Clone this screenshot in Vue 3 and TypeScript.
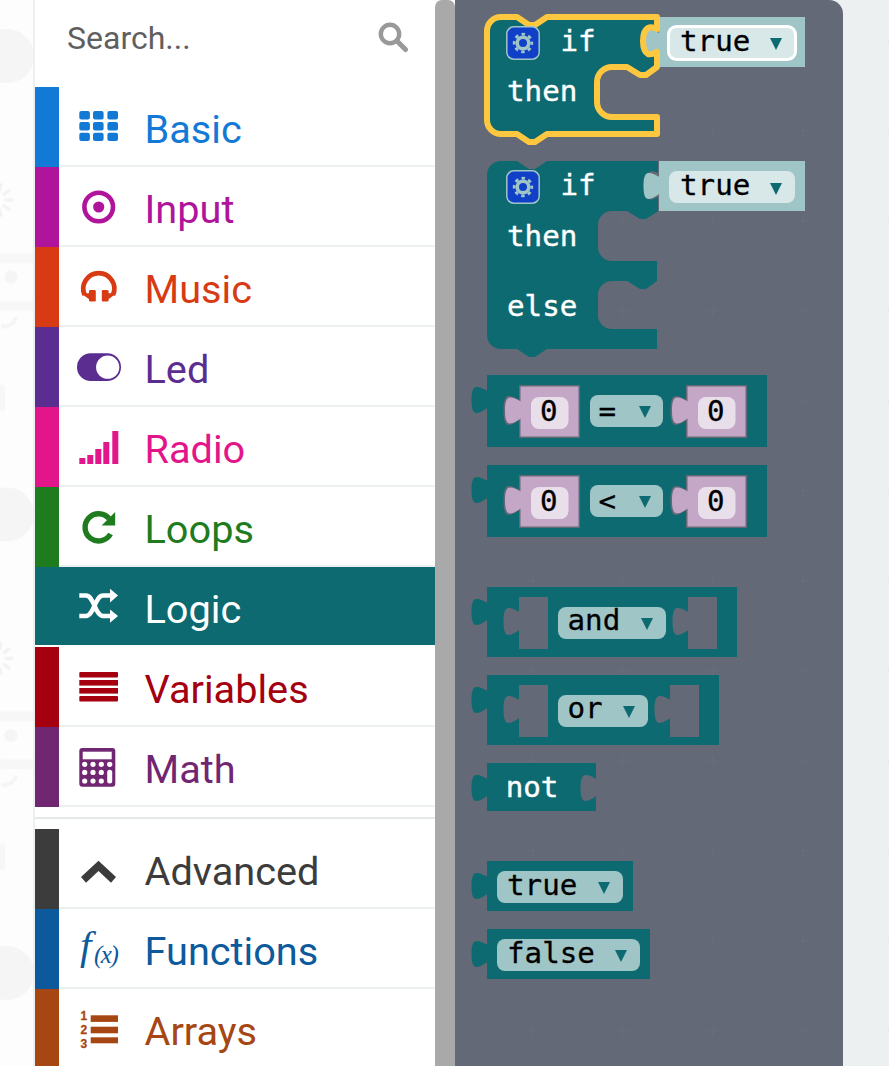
<script setup lang="ts">
type Category = { name: string; color: string; icon: string; selected?: boolean };

const categories: Category[] = [
  { name: "Basic", color: "#1379d6", icon: "grid" },
  { name: "Input", color: "#b0149a", icon: "dot" },
  { name: "Music", color: "#d83b14", icon: "headphones" },
  { name: "Led", color: "#5c2d91", icon: "toggle" },
  { name: "Radio", color: "#e3158a", icon: "signal" },
  { name: "Loops", color: "#1e7b1e", icon: "refresh" },
  { name: "Logic", color: "#0d6a70", icon: "shuffle", selected: true },
  { name: "Variables", color: "#a4000f", icon: "list" },
  { name: "Math", color: "#712672", icon: "calculator" },
];

const advanced: Category[] = [
  { name: "Advanced", color: "#3c3c3c", icon: "chevron" },
  { name: "Functions", color: "#0c5a9c", icon: "functions" },
  { name: "Arrays", color: "#a64612", icon: "numbered" },
];

// puzzle tab, x is the edge it hangs off, y the top of the tab
function tab(x: number, y: number, h = 26): string {
  const m = h / 2;
  return (
    `M${x} ${y + 4} C${x - 4} ${y + 2} ${x - 7} ${y} ${x - 11} ${y} ` +
    `C${x - 15} ${y} ${x - 16} ${y + m - 7} ${x - 16} ${y + m} ` +
    `C${x - 16} ${y + m + 7} ${x - 15} ${y + h} ${x - 11} ${y + h} ` +
    `C${x - 7} ${y + h} ${x - 4} ${y + h - 3} ${x} ${y + h - 5} Z`
  );
}

function tri(x: number, y: number): string {
  return `${x},${y} ${x + 12},${y} ${x + 6},${y + 12}`;
}

const notchTop = (y: number) => `L517 ${y} L529 ${y + 8} L535 ${y + 8} L547 ${y}`;

// the two "if" blocks share their outline, only the number of statements differ
const ifSelected =
  `M487 31 A14 14 0 0 1 501 17 ${notchTop(17)} L657 17 L657 29 ` +
  `C653 27 650 27 648 28 C644 30 643 36 643 41 C643 47 644 52 648 54 C650 55 653 54 657 52 ` +
  `L657 67 L646 75 L640 75 L627 67 L612 67 A15 15 0 0 0 597 82 L597 102 A15 15 0 0 0 612 117 ` +
  `L657 117 L657 134 L547 134 L535 142 L529 142 L517 134 L501 134 A14 14 0 0 1 487 120 Z`;

const ifElse =
  `M487 175 A14 14 0 0 1 501 161 ${notchTop(161)} L658 161 L658 173 ` +
  `C654 171 651 171 649 172 C645 174 644 180 644 186 C644 192 645 198 649 199 C651 200 654 199 658 197 ` +
  `L658 211 L657 212 L646 219 L640 219 L627 211 L612 211 A14 14 0 0 0 598 225 L598 247 A14 14 0 0 0 612 261 ` +
  `L657 261 L657 281 L646 289 L640 289 L627 281 L612 281 A14 14 0 0 0 598 295 L598 315 A14 14 0 0 0 612 329 ` +
  `L657 329 L657 349 L547 349 L535 357 L529 357 L517 349 L501 349 A14 14 0 0 1 487 335 Z`;

const flat = [
  { x: 487, y: 375, w: 280, h: 72, tab: 387 },
  { x: 487, y: 465, w: 280, h: 72, tab: 477 },
  { x: 487, y: 587, w: 250, h: 70, tab: 599 },
  { x: 487, y: 675, w: 232, h: 70, tab: 687 },
  { x: 487, y: 763, w: 109, h: 48, tab: 775 },
  { x: 487, y: 861, w: 146, h: 50, tab: 873 },
  { x: 487, y: 929, w: 163, h: 50, tab: 941 },
];

const numbers = [
  { x: 519, y: 385, tx: 540 },
  { x: 686, y: 385, tx: 707 },
  { x: 519, y: 475, tx: 540 },
  { x: 686, y: 475, tx: 707 },
];

const holes = [
  { x: 519, y: 597 },
  { x: 688, y: 597 },
  { x: 519, y: 685 },
  { x: 670, y: 685 },
];

const dropdowns = [
  { x: 590, y: 395, w: 73, label: "=", tx: 598.5, tb: 421, ax: 639, ay: 406 },
  { x: 590, y: 485, w: 73, label: "<", tx: 598.5, tb: 511, ax: 639, ay: 496 },
  { x: 558, y: 607, w: 108, label: "and", tx: 567.5, tb: 630, ax: 641, ay: 618 },
  { x: 558, y: 695, w: 90, label: "or", tx: 567.5, tb: 718, ax: 623, ay: 706 },
  { x: 497, y: 871, w: 126, label: "true", tx: 507, tb: 895, ax: 598, ay: 882 },
  { x: 497, y: 939, w: 143, label: "false", tx: 507, tb: 963, ax: 615, ay: 950 },
];

const ghostRays = [0, 36, 72, 108, 144];
</script>

<template>
  <div class="page">
    <svg class="ghost" width="33" height="1066">
      <defs>
        <pattern id="ghostTile" width="33" height="458.5" patternUnits="userSpaceOnUse">
          <circle cx="7" cy="56" r="27" fill="#f5f5f5" />
          <g stroke="#f3f3f3" stroke-width="3.5" stroke-linecap="round">
            <line
              v-for="r in ghostRays"
              :key="r"
              x1="6"
              y1="200"
              x2="12"
              y2="200"
              :transform="`rotate(${r - 72} -4 200)`"
            />
          </g>
          <rect x="-7" y="258" width="70" height="48" rx="10" fill="none" stroke="#f7f7f7" stroke-width="10" />
          <circle cx="11" cy="277" r="6.5" fill="#f5f5f5" />
          <path d="M1 326 A12 12 0 0 0 16 317" fill="none" stroke="#f5f5f5" stroke-width="4" />
          <rect x="-3" y="385" width="8" height="26" fill="#f7f7f7" />
        </pattern>
      </defs>
      <rect width="33" height="1066" fill="url(#ghostTile)" />
    </svg>

    <aside class="toolbox">
      <div class="search">
        <span class="search-text">Search...</span>
        <svg class="search-icon" width="32" height="32" viewBox="0 0 32 32">
          <circle cx="13" cy="12" r="9.2" fill="none" stroke="#999" stroke-width="4.4" />
          <line x1="20" y1="19" x2="28.5" y2="27.5" stroke="#999" stroke-width="5" stroke-linecap="round" />
        </svg>
      </div>

      <template v-for="(list, li) in [categories, advanced]" :key="li">
        <div v-if="li === 1" class="separator"></div>
        <div
          v-for="c in list"
          :key="c.name"
          class="row"
          :class="{ selected: c.selected }"
          :style="{ '--c': c.color }"
        >
          <span class="bar"></span>
          <div class="row-body">
            <svg class="icon" width="44" height="44" viewBox="0 0 44 44" fill="currentColor">
              <g v-if="c.icon === 'grid'">
                <rect x="2.3" y="7" width="10.6" height="8.4" rx="2" />
                <rect x="16" y="7" width="10.6" height="8.4" rx="2" />
                <rect x="30.4" y="7" width="10.6" height="8.4" rx="2" />
                <rect x="2.3" y="18" width="10.6" height="8.6" rx="2" />
                <rect x="16" y="18" width="10.6" height="8.6" rx="2" />
                <rect x="30.4" y="18" width="10.6" height="8.6" rx="2" />
                <rect x="2.3" y="28.7" width="10.6" height="8.4" rx="2" />
                <rect x="16" y="28.7" width="10.6" height="8.4" rx="2" />
                <rect x="30.4" y="28.7" width="10.6" height="8.4" rx="2" />
              </g>
              <g v-else-if="c.icon === 'dot'">
                <circle cx="21.7" cy="23" r="14.3" fill="none" stroke="currentColor" stroke-width="4.6" />
                <circle cx="21.7" cy="23" r="5.6" />
              </g>
              <g v-else-if="c.icon === 'headphones'">
                <path d="M7.7 31 A15.5 15.5 0 1 1 35.9 31" fill="none" stroke="currentColor" stroke-width="4.8" />
                <rect x="12" y="26" width="6.8" height="11.6" rx="1.4" />
                <rect x="24.8" y="26" width="6.8" height="11.6" rx="1.4" />
                <path d="M5 30 L12.5 35.5 L12.5 29 Z" />
                <path d="M38.6 30 L31.1 35.5 L31.1 29 Z" />
              </g>
              <g v-else-if="c.icon === 'toggle'">
                <rect x="0" y="9.3" width="44" height="27.7" rx="13.85" />
                <circle cx="30.7" cy="23.2" r="11.6" fill="#fff" />
              </g>
              <g v-else-if="c.icon === 'signal'">
                <rect x="2.3" y="34" width="6" height="6" />
                <rect x="10.3" y="31" width="6" height="9" />
                <rect x="18.3" y="25" width="6" height="15" />
                <rect x="26.3" y="18" width="6" height="22" />
                <rect x="35.3" y="7" width="6" height="33" />
              </g>
              <g v-else-if="c.icon === 'refresh'">
                <path d="M32 14.5 A13.6 13.6 0 1 0 33.5 30" fill="none" stroke="currentColor" stroke-width="5.4" />
                <polygon points="38.2,8 38.2,21.6 24.6,21.6" />
              </g>
              <g v-else-if="c.icon === 'shuffle'">
                <path
                  d="M2.3 11.5 H9 C17 11.5 18 32 26 32 H34 M2.3 32 H9 C17 32 18 11.5 26 11.5 H34"
                  fill="none"
                  stroke="currentColor"
                  stroke-width="4.4"
                />
                <polygon points="33,4.8 41,11.5 33,18.4" />
                <polygon points="33,25.4 41,32 33,38.8" />
              </g>
              <g v-else-if="c.icon === 'list'">
                <rect x="2.3" y="8" width="38.7" height="5.6" rx="1" />
                <rect x="2.3" y="16" width="38.7" height="5.6" />
                <rect x="2.3" y="24" width="38.7" height="5.6" />
                <rect x="2.3" y="32" width="38.7" height="5.6" rx="1" />
              </g>
              <g v-else-if="c.icon === 'calculator'">
                <rect x="2.3" y="4" width="36" height="38.7" rx="3" />
                <g fill="#fff">
                  <rect x="5.7" y="7.7" width="29" height="7.6" />
                  <circle cx="7.7" cy="20.3" r="2.6" />
                  <circle cx="16" cy="20.3" r="2.6" />
                  <circle cx="24.3" cy="20.3" r="2.6" />
                  <circle cx="32.7" cy="20.3" r="2.6" />
                  <circle cx="7.7" cy="28.4" r="2.6" />
                  <circle cx="16" cy="28.4" r="2.6" />
                  <circle cx="24.3" cy="28.4" r="2.6" />
                  <circle cx="7.7" cy="37" r="2.6" />
                  <circle cx="16" cy="37" r="2.6" />
                  <circle cx="24.3" cy="37" r="2.6" />
                  <rect x="30.2" y="25.8" width="5" height="13.8" rx="2.5" />
                </g>
              </g>
              <g v-else-if="c.icon === 'chevron'">
                <polygon points="21.5,14.7 39,31 34,36.7 21.5,25 9,36.7 4,31" />
              </g>
              <g v-else-if="c.icon === 'functions'">
                <text class="fn-f" x="3" y="33">f</text>
                <text class="fn-x" x="17" y="36.5">(x)</text>
              </g>
              <g v-else-if="c.icon === 'numbered'">
                <rect x="13.7" y="9.3" width="27.3" height="6.6" />
                <rect x="13.7" y="20.7" width="27.3" height="6.6" />
                <rect x="13.7" y="31.3" width="27.3" height="6" />
                <text class="num" x="3.4" y="14">1</text>
                <text class="num" x="3.4" y="28">2</text>
                <text class="num" x="3.4" y="42">3</text>
              </g>
            </svg>
            <span class="label">{{ c.name }}</span>
          </div>
        </div>
      </template>
    </aside>

    <div class="scrollbar"></div>

    <!-- coordinates are the page's own so the viewBox starts where this pane starts -->
    <svg class="workspace" viewBox="455 0 434 1066" width="434" height="1066">
      <defs>
        <pattern id="gridLight" x="438" y="36" width="90" height="90" patternUnits="userSpaceOnUse">
          <path d="M0 5 H10 M5 0 V10" stroke="#dcdfe0" stroke-width="1" fill="none" />
        </pattern>
        <pattern id="gridDark" x="438" y="36" width="90" height="90" patternUnits="userSpaceOnUse">
          <path d="M0 5 H10 M5 0 V10" stroke="#696d7a" stroke-width="1" fill="none" />
        </pattern>
        <g id="gear">
          <rect x="-16.2" y="-16.2" width="32.4" height="32.4" rx="7" fill="#1040c8" stroke="#9fc5c7" stroke-width="1.5" />
          <circle r="8.8" fill="none" stroke="#9fc5c7" stroke-width="2.8" stroke-dasharray="3.5 3.41" stroke-dashoffset="1.75" />
          <circle r="5.8" fill="none" stroke="#9fc5c7" stroke-width="3.6" />
        </g>
      </defs>

      <rect x="455" width="434" height="1066" fill="#ecf0f1" />
      <rect x="455" width="434" height="1066" fill="url(#gridLight)" />
      <path d="M455 0 H829 A14 14 0 0 1 843 14 V1066 H455 Z" fill="#646977" />
      <path d="M455 0 H829 A14 14 0 0 1 843 14 V1066 H455 Z" fill="url(#gridDark)" />

      <!-- if / then, selected -->
      <path :d="ifSelected" class="teal" />
      <path d="M659 17 H805 V67 H659 V52 L659 29 Z" class="light" />
      <path :d="tab(659, 29)" class="light" />
      <path :d="ifSelected" class="outline" />
      <use href="#gear" x="523" y="43" />
      <text class="word" x="560.5" y="51">if</text>
      <text class="word" x="507" y="101">then</text>
      <rect x="668.5" y="26.5" width="127" height="33" rx="8" class="pill-on" />
      <text class="dark" x="680" y="51">true</text>
      <polygon :points="tri(770, 38)" class="arrow" />

      <!-- if / then / else -->
      <path :d="ifElse" class="teal" />
      <rect x="659" y="161" width="146" height="50" class="light" />
      <path :d="tab(659.5, 173)" class="light" />
      <use href="#gear" x="523" y="187" />
      <text class="word" x="560.5" y="195">if</text>
      <text class="word" x="507" y="246">then</text>
      <text class="word" x="507" y="316">else</text>
      <rect x="669" y="171" width="126" height="32" rx="8" class="pill" />
      <text class="dark" x="680" y="195">true</text>
      <polygon :points="tri(770, 183)" class="arrow" />

      <!-- value blocks -->
      <g v-for="b in flat" :key="b.y">
        <rect :x="b.x" :y="b.y" :width="b.w" :height="b.h" class="teal" />
        <path :d="tab(b.x + 0.5, b.tab)" class="teal" />
      </g>

      <g v-for="n in numbers" :key="`${n.x}-${n.y}`">
        <rect :x="n.x" :y="n.y" width="61" height="53" class="hole" />
        <path :d="tab(n.x + 0.5, n.y + 11, 29)" class="hole" />
        <rect :x="n.x + 1.5" :y="n.y + 1.5" width="58" height="50" class="plum" />
        <path :d="tab(n.x + 2, n.y + 12.5, 26)" class="plum" />
        <rect :x="n.x + 12" :y="n.y + 12" width="37.5" height="32" rx="8" class="plum-pill" />
        <text class="dark" :x="n.tx" :y="n.y + 36">0</text>
      </g>

      <g v-for="h in holes" :key="`${h.x}-${h.y}`">
        <rect :x="h.x" :y="h.y" width="29" height="52" class="hole" />
        <path :d="tab(h.x + 0.5, h.y + 11, 27)" class="hole" />
      </g>

      <g v-for="d in dropdowns" :key="d.y">
        <rect :x="d.x" :y="d.y" :width="d.w" height="32" rx="8" class="light" />
        <text class="dark" :x="d.tx" :y="d.tb">{{ d.label }}</text>
        <polygon :points="tri(d.ax, d.ay)" class="arrow" />
      </g>

      <text class="word" x="505.7" y="797">not</text>
      <path :d="tab(596.5, 775)" class="hole" />
    </svg>
  </div>
</template>

<style scoped>
.page {
  display: flex;
  width: 889px;
  height: 1066px;
  overflow: hidden;
  background: #fdfdfd;
}

.ghost {
  flex: none;
  display: block;
}

.toolbox {
  flex: none;
  width: 400px;
  height: 1066px;
  overflow: hidden;
  background: #fff;
  border-left: 2px solid #ecf0f1;
  font-family: Roboto, "Liberation Sans", sans-serif;
}

.search {
  display: flex;
  align-items: center;
  justify-content: space-between;
  height: 87px;
  padding: 0 26px 12px 32px;
  box-sizing: border-box;
}

.search-text {
  font-size: 32px;
  color: #5f5f5f;
}

.search-icon {
  display: block;
}

.row {
  display: flex;
  height: 80px;
}

.bar {
  flex: none;
  width: 24px;
  background: var(--c);
}

.row-body {
  flex: 1;
  display: flex;
  align-items: center;
  gap: 23.5px;
  padding-left: 18px;
  border-bottom: 2px solid #ecf0f1;
  color: var(--c);
}

.selected .bar {
  height: 78px;
}

.selected .row-body {
  background: var(--c);
  color: #fff;
  border-bottom-color: #fff;
}

.icon {
  flex: none;
  display: block;
  overflow: visible;
}

.label {
  font-size: 39.7px;
  line-height: 1;
  padding-top: 8px;
}

.separator {
  height: 22px;
  box-sizing: border-box;
  padding-top: 10px;
}

.separator::before {
  content: "";
  display: block;
  height: 2px;
  background: #e5e8e8;
}

.fn-f {
  font-family: "Liberation Serif", serif;
  font-style: italic;
  font-size: 41px;
}

.fn-x {
  font-family: "Liberation Serif", serif;
  font-style: italic;
  font-size: 25px;
  letter-spacing: -1.5px;
}

.num {
  font-family: "Liberation Sans", sans-serif;
  font-weight: 700;
  font-size: 12px;
  stroke: currentColor;
  stroke-width: 0.3px;
}

.scrollbar {
  flex: none;
  width: 20px;
  height: 1066px;
  background: #a9a9a9;
  border-radius: 7px 7px 0 0;
}

.workspace {
  flex: none;
  display: block;
}

.teal {
  fill: #0d6a70;
}

.light {
  fill: #9fc5c7;
}

.hole {
  fill: #646977;
}

.plum {
  fill: #c4a7c6;
}

.plum-pill {
  fill: #e8dfeb;
}

.pill {
  fill: #d8e7e8;
}

.pill-on {
  fill: #d8e7e8;
  stroke: #fff;
  stroke-width: 3;
}

.outline {
  fill: none;
  stroke: #fdc83f;
  stroke-width: 6;
  stroke-linejoin: round;
}

.arrow {
  fill: #0d6a70;
}

.word,
.dark {
  font-family: "DejaVu Sans Mono", "Liberation Mono", monospace;
  font-size: 29.2px;
}

.word {
  fill: #fff;
  stroke: #fff;
  stroke-width: 0.4px;
}

.dark {
  fill: #000;
  stroke: #000;
  stroke-width: 0.3px;
}
</style>
